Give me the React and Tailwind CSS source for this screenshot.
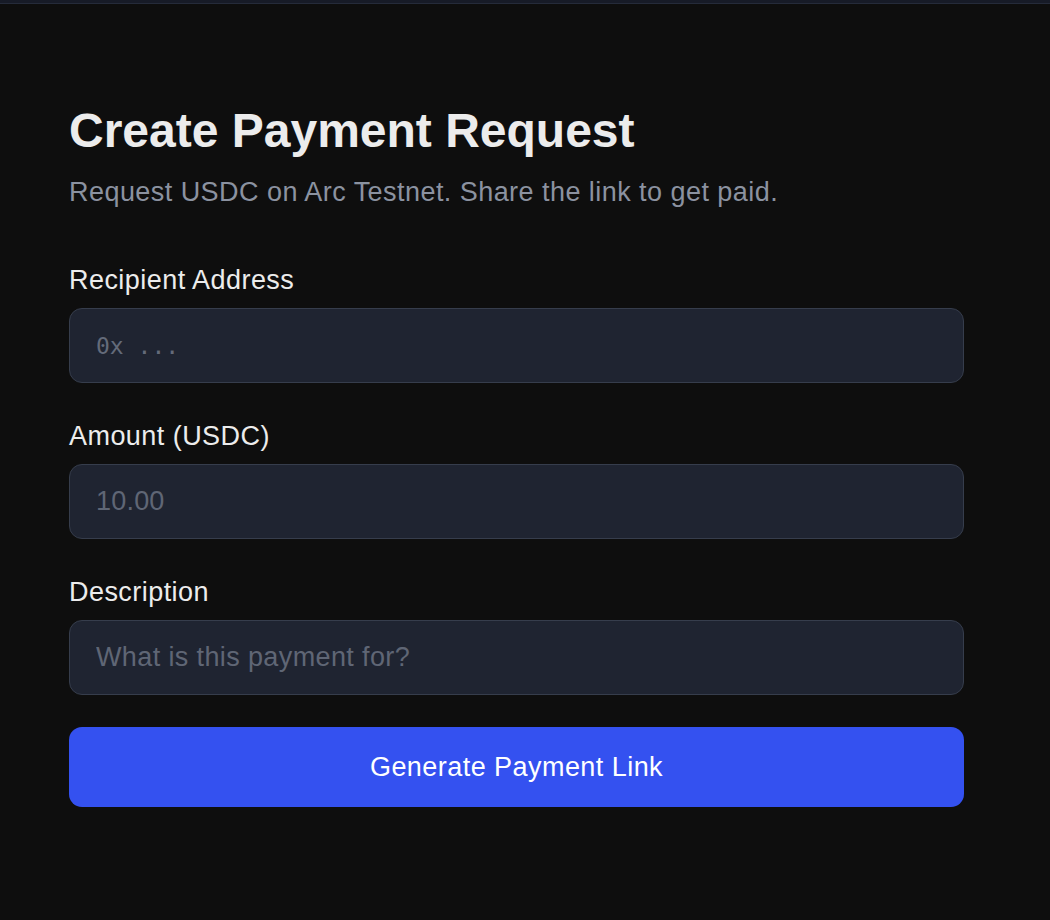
export default function App() {
  const font = { fontFamily: '"Liberation Sans", Arial, sans-serif' };
  return (
    <div className="min-h-[920px] w-full bg-[#0e0e0e]" style={font}>
      <div className="h-[4px] w-full border-b border-[#252b3a] bg-[#171b27]" />
      <div className="ml-[69px] w-[895px] pt-[99px]">
        <h1 className="text-[48px] font-bold leading-[56px] text-[#ececec]">Create Payment Request</h1>
        <p className="mt-[17px] text-[27px] leading-[32px] tracking-[0.45px] text-[#8b92a0]">
          Request USDC on Arc Testnet. Share the link to get paid.
        </p>
        <form className="mt-[56px] flex flex-col" onSubmit={(e) => e.preventDefault()}>
          <div className="flex flex-col">
            <label className="text-[27px] leading-[32px] tracking-[0.45px] text-[#ececec]">Recipient Address</label>
            <input
              className="mt-[12px] h-[75px] w-full rounded-[13px] border border-[#363d4c] bg-[#1f2431] px-[26px] text-[23px] text-[#e5e7eb] outline-none placeholder:text-[#646b7a]"
              style={{ fontFamily: '"DejaVu Sans Mono", monospace' }}
              placeholder="0x ..."
            />
          </div>
          <div className="mt-[37px] flex flex-col">
            <label className="text-[27px] leading-[32px] tracking-[0.45px] text-[#ececec]">Amount (USDC)</label>
            <input
              className="mt-[12px] h-[75px] w-full rounded-[13px] border border-[#363d4c] bg-[#1f2431] px-[26px] text-[27px] tracking-[0.2px] text-[#e5e7eb] outline-none placeholder:text-[#5f6675]"
              placeholder="10.00"
            />
          </div>
          <div className="mt-[37px] flex flex-col">
            <label className="text-[27px] leading-[32px] tracking-[0.45px] text-[#ececec]">Description</label>
            <input
              className="mt-[12px] h-[75px] w-full rounded-[13px] border border-[#363d4c] bg-[#1f2431] px-[26px] text-[27px] tracking-[0.38px] text-[#e5e7eb] outline-none placeholder:text-[#5f6675]"
              placeholder="What is this payment for?"
            />
          </div>
          <button
            type="submit"
            className="mt-[32px] h-[80px] w-full rounded-[13px] bg-[#3451f0] text-[27px] tracking-[0.45px] text-white"
          >
            Generate Payment Link
          </button>
        </form>
      </div>
    </div>
  );
}
